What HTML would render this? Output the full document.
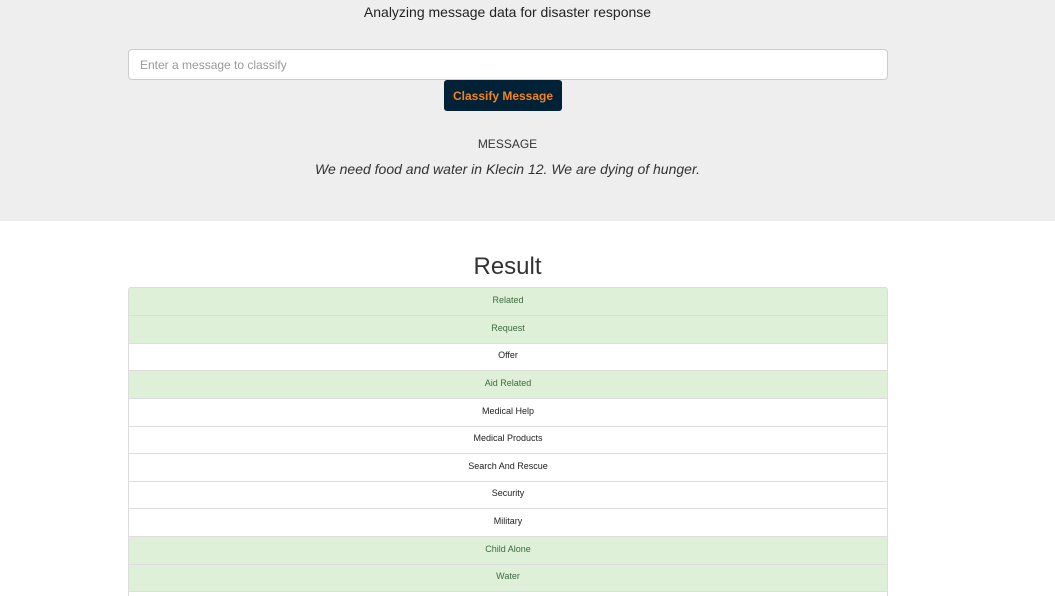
<!DOCTYPE html><html><head><style>
html,body{margin:0;width:1055px;height:596px;overflow:hidden}
body{background:#fff;font-family:"Liberation Sans",Arial,sans-serif;color:#333;position:relative}
.jumbo{position:absolute;left:0;top:0;width:1055px;height:221px;background:#eee}
.t{position:absolute;left:0;width:1015px;text-align:center}
.inp{position:absolute;left:128px;top:49px;width:760px;height:31px;border:1px solid #ccc;border-radius:4px;background:#fff;box-sizing:border-box;font-size:12px;color:#999;padding:8px 11px}
.btn{position:absolute;left:444px;top:80px;width:118px;height:31px;background:#012137;border-radius:3px;color:#f5841f;font-size:12px;font-weight:bold;text-align:center;line-height:32px}
.row{position:absolute;left:128px;width:760px;box-sizing:border-box;border:1px solid #ddd;font-size:9px;text-align:center;background:#fff;color:#222}
.g{background:#dff0d8;color:#3c6b3d}
</style></head><body>
<div class="jumbo"></div>
<div class="t" style="top:4px;font-size:14px;color:#222;width:1015px">Analyzing message data for disaster response</div>
<div class="inp">Enter a message to classify</div>
<div class="btn">Classify Message</div>
<div class="t" style="top:137px;font-size:12px;color:#333">MESSAGE</div>
<div class="t" style="top:161px;font-size:14px;font-style:italic;color:#333">We need food and water in Klecin 12. We are dying of hunger.</div>
<div class="t" style="top:253px;font-size:24px;color:#333">Result</div>
<div class="row g" style="top:287px;height:29px;line-height:24px;border-radius:3px 3px 0 0">Related</div>
<div class="row g" style="top:315px;height:29px;line-height:24px">Request</div>
<div class="row" style="top:343px;height:28px;line-height:23px">Offer</div>
<div class="row g" style="top:370px;height:29px;line-height:24px">Aid Related</div>
<div class="row" style="top:398px;height:29px;line-height:24px">Medical Help</div>
<div class="row" style="top:426px;height:28px;line-height:23px">Medical Products</div>
<div class="row" style="top:453px;height:29px;line-height:24px">Search And Rescue</div>
<div class="row" style="top:481px;height:28px;line-height:23px">Security</div>
<div class="row" style="top:508px;height:29px;line-height:24px">Military</div>
<div class="row g" style="top:536px;height:29px;line-height:24px">Child Alone</div>
<div class="row g" style="top:564px;height:28px;line-height:23px">Water</div>
<div class="row" style="top:591px;height:29px;line-height:24px"></div>
</body></html>
